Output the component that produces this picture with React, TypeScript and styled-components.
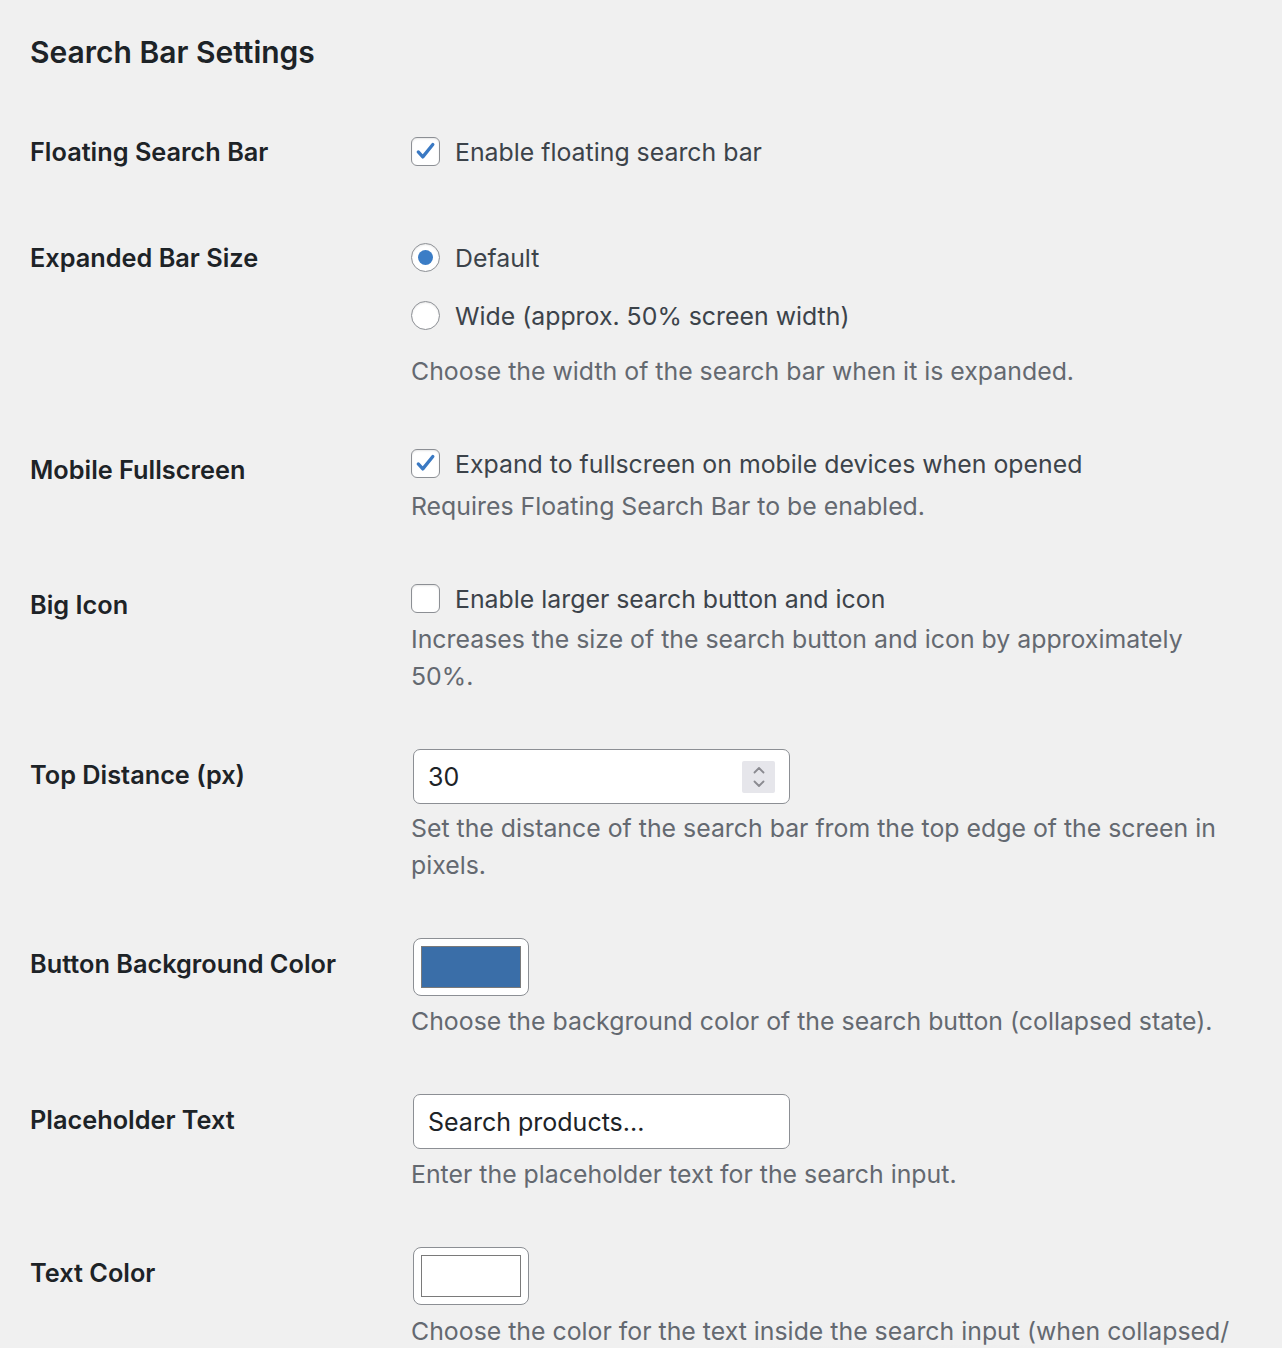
import styled, { createGlobalStyle } from 'styled-components';

const GlobalStyle = createGlobalStyle`
  html, body {
    margin: 0;
    background: #f0f0f0;
  }
  body {
    font-family: Inter, "Noto Sans", sans-serif;
    color: #3c434a;
    -webkit-font-smoothing: antialiased;
  }
`;

const Page = styled.div`
  position: relative;
  box-sizing: border-box;
  min-height: 1348px;
  padding: 32px 42px 0 30px;
  overflow: hidden;
`;

const Title = styled.h2`
  margin: 0 0 27px;
  font-size: 30px;
  line-height: 40px;
  font-weight: 600;
  color: #1d2327;
`;

const Row = styled.div`
  display: grid;
  grid-template-columns: 381px 1fr;
`;

const Label = styled.div<{ $bottom?: number }>`
  padding: 37px 0 ${p => p.$bottom ?? 37}px;
  font-size: 25.3px;
  line-height: 31px;
  font-weight: 600;
  color: #1d2327;
`;

const Cell = styled.div`
  padding: 27px 0;
  display: flex;
  flex-direction: column;
  align-items: flex-start;
`;

const Options = styled.div<{ $top?: number }>`
  display: flex;
  flex-direction: column;
  gap: 19px;
  margin-top: ${p => p.$top ?? 0}px;
`;

const Option = styled.label`
  display: flex;
  align-items: center;
  gap: 15px;
  height: 39px;
  font-size: 24.85px;
  color: #3c434a;
`;

const Box = styled.span<{ $round?: boolean }>`
  box-sizing: border-box;
  width: 29px;
  height: 29px;
  flex: none;
  display: flex;
  align-items: center;
  justify-content: center;
  background: #fff;
  border: 1px solid #8c8f94;
  border-radius: ${p => (p.$round ? '50%' : '6px')};
  box-shadow: inset 0 1px 2px rgba(0, 0, 0, 0.1);
`;

const Dot = styled.span`
  width: 15px;
  height: 15px;
  border-radius: 50%;
  background: #3b7dc6;
`;

const Description = styled.p<{ $top: number }>`
  margin: ${p => p.$top}px 0 0;
  font-size: 24.85px;
  line-height: 37px;
  color: #646970;
`;

const Field = styled.div<{ $width: number }>`
  box-sizing: border-box;
  width: ${p => p.$width}px;
  height: 55px;
  margin-left: 2px;
  display: flex;
  align-items: center;
  justify-content: space-between;
  padding: 0 14px 0 14px;
  background: #fff;
  border: 1px solid #8c8f94;
  border-radius: 7px;
  font-size: 25px;
  color: #1d2327;
`;

const Spinner = styled.span`
  width: 33px;
  height: 32px;
  display: flex;
  align-items: center;
  justify-content: center;
  background: #e6e6eb;
  border-radius: 2px;
`;

const Swatch = styled.div`
  box-sizing: border-box;
  width: 116px;
  height: 58px;
  margin-left: 2px;
  padding: 7px;
  background: #fff;
  border: 1px solid #8c8f94;
  border-radius: 8px;
`;

const SwatchFill = styled.div<{ $color: string }>`
  box-sizing: border-box;
  width: 100%;
  height: 100%;
  background: ${p => p.$color};
  border: 1px solid #7a7a7a;
`;

const BottomShade = styled.div`
  position: absolute;
  left: 0;
  right: 0;
  bottom: 0;
  height: 90px;
  pointer-events: none;
  background: radial-gradient(ellipse 75% 100% at 75% 120%, rgba(0, 0, 0, 0.07), rgba(0, 0, 0, 0) 100%);
`;

const Check = () => (
  <svg width="27" height="27" viewBox="0 0 28 28" fill="none">
    <path d="M6.5 14.5 11.2 19.6 21.6 6.8" stroke="#3a79c3" strokeWidth="3.4" strokeLinecap="round" strokeLinejoin="round" />
  </svg>
);

const Chevrons = () => (
  <svg width="14" height="26" viewBox="0 0 14 26" fill="none" stroke="#8a8a90" strokeWidth="1.8" strokeLinecap="round" strokeLinejoin="round">
    <path d="M2.5 8.5 7 4l4.5 4.5" />
    <path d="M2.5 17.5 7 22l4.5-4.5" />
  </svg>
);

export default function App() {
  return (
    <Page>
      <GlobalStyle />
      <Title>Search Bar Settings</Title>

      <Row>
        <Label $bottom={38}>Floating Search Bar</Label>
        <Cell>
          <Options $top={6}>
            <Option><Box><Check /></Box>Enable floating search bar</Option>
          </Options>
        </Cell>
      </Row>

      <Row>
        <Label>Expanded Bar Size</Label>
        <Cell>
          <Options $top={6}>
            <Option><Box $round><Dot /></Box>Default</Option>
            <Option><Box $round />Wide (approx. 50% screen width)</Option>
          </Options>
          <Description $top={18}>Choose the width of the search bar when it is expanded.</Description>
        </Cell>
      </Row>

      <Row>
        <Label>Mobile Fullscreen</Label>
        <Cell>
          <Options>
            <Option><Box><Check /></Box>Expand to fullscreen on mobile devices when opened</Option>
          </Options>
          <Description $top={5}>Requires Floating Search Bar to be enabled.</Description>
        </Cell>
      </Row>

      <Row>
        <Label>Big Icon</Label>
        <Cell>
          <Options>
            <Option><Box />Enable larger search button and icon</Option>
          </Options>
          <Description $top={3}>Increases the size of the search button and icon by approximately 50%.</Description>
        </Cell>
      </Row>

      <Row>
        <Label>Top Distance (px)</Label>
        <Cell>
          <Field $width={377}>
            30
            <Spinner><Chevrons /></Spinner>
          </Field>
          <Description $top={6}>Set the distance of the search bar from the top edge of the screen in pixels.</Description>
        </Cell>
      </Row>

      <Row>
        <Label>Button Background Color</Label>
        <Cell>
          <Swatch><SwatchFill $color="#3a6ea8" /></Swatch>
          <Description $top={7}>Choose the background color of the search button (collapsed state).</Description>
        </Cell>
      </Row>

      <Row>
        <Label>Placeholder Text</Label>
        <Cell>
          <Field $width={377}>Search products...</Field>
          <Description $top={7}>Enter the placeholder text for the search input.</Description>
        </Cell>
      </Row>

      <Row>
        <Label>Text Color</Label>
        <Cell>
          <Swatch><SwatchFill $color="#ffffff" /></Swatch>
          <Description $top={8}>Choose the color for the text inside the search input (when collapsed/<wbr />expanded).</Description>
        </Cell>
      </Row>

      <BottomShade />
    </Page>
  );
}
